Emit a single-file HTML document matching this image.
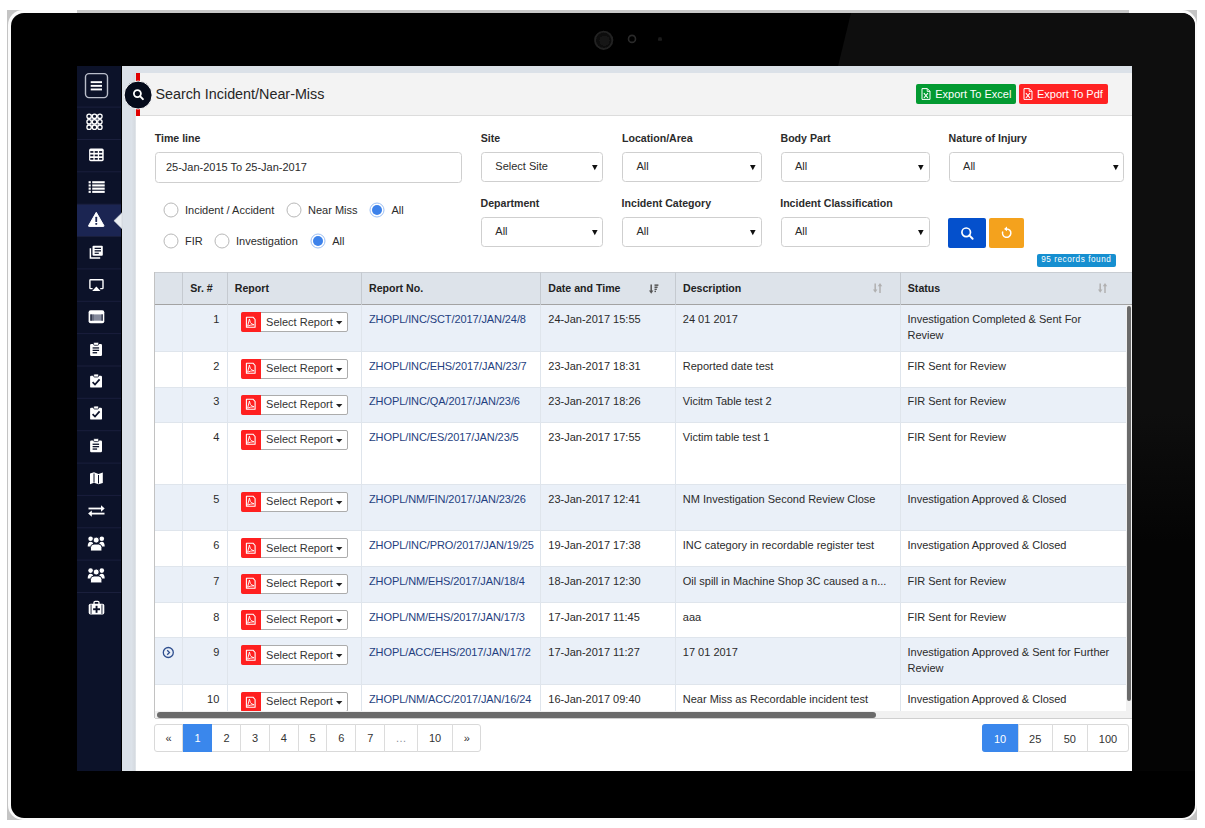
<!DOCTYPE html>
<html><head><meta charset="utf-8">
<style>
*{box-sizing:border-box;margin:0;padding:0}
html,body{width:1205px;height:828px;overflow:hidden;background:#fff;font-family:"Liberation Sans",sans-serif;color:#333}
.abs,.r,.t{position:absolute}
.t{white-space:nowrap;line-height:1}
#clip{position:absolute;left:0;top:0;width:1205px;height:828px;clip-path:inset(66px 73px 57px 77px)}
</style></head><body>
<div class="abs" style="left:7px;top:10px;width:1190px;height:810px;background:#c4c4c4"></div>
<div class="abs" style="left:8px;top:10px;width:1189px;height:809.5px;background:#fafafa;border-radius:15px"></div>
<div class="abs" style="left:77px;top:10px;width:1052px;height:3px;background:#c8c8c8"></div>
<div class="abs" style="left:11px;top:12.5px;width:1183.5px;height:805px;background:#000;border-radius:13px;overflow:hidden">
<svg class="abs" style="left:0;top:0" width="1184" height="805">
<defs><linearGradient id="rg" gradientUnits="userSpaceOnUse" x1="0" y1="400" x2="0" y2="530"><stop offset="0" stop-color="#0e0e0e"/><stop offset="1" stop-color="#040404"/></linearGradient></defs><polygon points="840,0 1184,0 1184,758 1121,758 827,53.5" fill="url(#rg)"/>
<defs><filter id="bl"><feGaussianBlur stdDeviation="0.5"/></filter></defs><g filter="url(#bl)">
<circle cx="592.7" cy="27.3" r="8.7" fill="#101010" stroke="#222" stroke-width="1.8"/>
<circle cx="593.5" cy="27.8" r="5" fill="#161616"/>
<circle cx="621" cy="25.9" r="3.5" fill="none" stroke="#2a2a2a" stroke-width="1.6"/>
<circle cx="649" cy="26.1" r="2.2" fill="#1a1a1a"/></g>
</svg></div>
<div id="clip"><div class="r" style="left:77.00px;top:66.00px;width:1055.00px;height:705.00px;background:#dbe1e8"></div><div class="r" style="left:77px;top:66px;width:45px;height:705px;background:#0c1229"><svg class="abs" style="left:0;top:0" width="45" height="704"><rect x="0" y="138.1" width="45" height="31.9" fill="#1b2552"/><rect x="0" y="40.6" width="45" height="1" fill="#1a1f3c"/><rect x="0" y="73.0" width="45" height="1" fill="#1a1f3c"/><rect x="0" y="105.3" width="45" height="1" fill="#1a1f3c"/><rect x="0" y="137.7" width="45" height="1" fill="#1a1f3c"/><rect x="0" y="170.0" width="45" height="1" fill="#1a1f3c"/><rect x="0" y="202.4" width="45" height="1" fill="#1a1f3c"/><rect x="0" y="234.8" width="45" height="1" fill="#1a1f3c"/><rect x="0" y="267.1" width="45" height="1" fill="#1a1f3c"/><rect x="0" y="299.5" width="45" height="1" fill="#1a1f3c"/><rect x="0" y="331.8" width="45" height="1" fill="#1a1f3c"/><rect x="0" y="364.2" width="45" height="1" fill="#1a1f3c"/><rect x="0" y="396.6" width="45" height="1" fill="#1a1f3c"/><rect x="0" y="428.9" width="45" height="1" fill="#1a1f3c"/><rect x="0" y="461.3" width="45" height="1" fill="#1a1f3c"/><rect x="0" y="493.6" width="45" height="1" fill="#1a1f3c"/><rect x="0" y="526.0" width="45" height="1" fill="#1a1f3c"/><rect x="8.5" y="7.6" width="22" height="24" rx="3.5" fill="none" stroke="#b9bdca" stroke-width="1.4"/><rect x="13.7" y="15.2" width="11.3" height="1.9" fill="#fff"/><rect x="13.7" y="18.9" width="11.3" height="1.9" fill="#fff"/><rect x="13.7" y="22.5" width="11.3" height="1.9" fill="#fff"/><rect x="10" y="48.2" width="14.2" height="14.2" fill="#5c6175"/><circle cx="12.10" cy="50.30" r="2.2" fill="#0c1229" stroke="#fff" stroke-width="1.3"/><circle cx="12.10" cy="55.75" r="2.2" fill="#0c1229" stroke="#fff" stroke-width="1.3"/><circle cx="12.10" cy="61.20" r="2.2" fill="#0c1229" stroke="#fff" stroke-width="1.3"/><circle cx="17.50" cy="50.30" r="2.2" fill="#0c1229" stroke="#fff" stroke-width="1.3"/><circle cx="17.50" cy="55.75" r="2.2" fill="#0c1229" stroke="#fff" stroke-width="1.3"/><circle cx="17.50" cy="61.20" r="2.2" fill="#0c1229" stroke="#fff" stroke-width="1.3"/><circle cx="22.90" cy="50.30" r="2.2" fill="#0c1229" stroke="#fff" stroke-width="1.3"/><circle cx="22.90" cy="55.75" r="2.2" fill="#0c1229" stroke="#fff" stroke-width="1.3"/><circle cx="22.90" cy="61.20" r="2.2" fill="#0c1229" stroke="#fff" stroke-width="1.3"/><rect x="12.1" y="82.6" width="14.6" height="12.6" rx="1.6" fill="#fff"/><rect x="13.30" y="85.10" width="3.1" height="1.7" fill="#0c1229"/><rect x="13.30" y="88.55" width="3.1" height="1.7" fill="#0c1229"/><rect x="13.30" y="92.00" width="3.1" height="1.7" fill="#0c1229"/><rect x="17.70" y="85.10" width="3.1" height="1.7" fill="#0c1229"/><rect x="17.70" y="88.55" width="3.1" height="1.7" fill="#0c1229"/><rect x="17.70" y="92.00" width="3.1" height="1.7" fill="#0c1229"/><rect x="22.10" y="85.10" width="3.1" height="1.7" fill="#0c1229"/><rect x="22.10" y="88.55" width="3.1" height="1.7" fill="#0c1229"/><rect x="22.10" y="92.00" width="3.1" height="1.7" fill="#0c1229"/><rect x="11.6" y="115.2" width="2.2" height="2.1" fill="#fff"/><rect x="15.2" y="115.2" width="12.5" height="2.1" fill="#fff"/><rect x="11.6" y="118.4" width="2.2" height="2.1" fill="#fff"/><rect x="15.2" y="118.4" width="12.5" height="2.1" fill="#fff"/><rect x="11.6" y="121.6" width="2.2" height="2.1" fill="#fff"/><rect x="15.2" y="121.6" width="12.5" height="2.1" fill="#fff"/><rect x="11.6" y="124.8" width="2.2" height="2.1" fill="#fff"/><rect x="15.2" y="124.8" width="12.5" height="2.1" fill="#fff"/><path d="M19.25,146.3 L26.9,159.6 Q27.3,160.4 26.4,160.4 L12.1,160.4 Q11.2,160.4 11.6,159.6 Z" fill="#fff" stroke="#fff" stroke-width="1" stroke-linejoin="round"/><rect x="18.35" y="150.8" width="1.8" height="5.2" rx="0.5" fill="#1b2552"/><rect x="18.35" y="157" width="1.8" height="1.8" rx="0.4" fill="#1b2552"/><path d="M13.4,182.2 L13.4,192.1 L23.2,192.1" fill="none" stroke="#fff" stroke-width="1.5"/><rect x="15.5" y="179.8" width="10.3" height="9.9" rx="1" fill="#fff"/><rect x="17.6" y="181.7" width="6.4" height="1.3" fill="#0c1229"/><rect x="17.6" y="184.2" width="6.4" height="1.3" fill="#0c1229"/><rect x="17.6" y="186.7" width="4.2" height="1.2" fill="#0c1229"/><path d="M15.6,222.6 L13.6,222.6 Q12.9,222.6 12.9,221.9 L12.9,214.4 Q12.9,213.7 13.6,213.7 L25.3,213.7 Q26,213.7 26,214.4 L26,221.9 Q26,222.6 25.3,222.6 L23.2,222.6" fill="none" stroke="#fff" stroke-width="1.4"/><polygon points="19.35,220.4 23.5,224.9 15.2,224.9" fill="#fff"/><rect x="11.6" y="244.2" width="15.7" height="13" rx="2" fill="#fff"/><rect x="13.3" y="248.4" width="12.6" height="6.3" fill="#858a9c"/><rect x="13.3" y="248.4" width="1.6" height="6.3" fill="#2a2f45"/><rect x="24.4" y="248.4" width="1.5" height="6.3" fill="#3a3f55"/><rect x="15.6" y="248.4" width="0.8" height="6.3" fill="#40455a"/><rect x="13.1" y="278.1" width="11.9" height="11.8" rx="1.2" fill="#fff"/><rect x="16.6" y="276.3" width="5" height="3" rx="1" fill="#fff" stroke="#0c1229" stroke-width="0.8"/><rect x="15.6" y="281.3" width="6.5" height="1.3" fill="#0c1229"/><rect x="15.6" y="283.7" width="6.5" height="1.3" fill="#0c1229"/><rect x="15.6" y="286.1" width="4.5" height="1.3" fill="#0c1229"/><rect x="13.1" y="309.8" width="11.9" height="11.8" rx="1.2" fill="#fff"/><rect x="16.6" y="308.0" width="5" height="3" rx="1" fill="#fff" stroke="#0c1229" stroke-width="0.8"/><path d="M15.6,316.2 L18,318.6 L22.6,313.4" fill="none" stroke="#0c1229" stroke-width="1.7"/><rect x="13.1" y="341.8" width="11.9" height="11.8" rx="1.2" fill="#fff"/><rect x="16.6" y="340.0" width="5" height="3" rx="1" fill="#fff" stroke="#0c1229" stroke-width="0.8"/><path d="M15.6,348.2 L18,350.6 L22.6,345.4" fill="none" stroke="#0c1229" stroke-width="1.7"/><rect x="13.1" y="374.4" width="11.9" height="11.8" rx="1.2" fill="#fff"/><rect x="16.6" y="372.6" width="5" height="3" rx="1" fill="#fff" stroke="#0c1229" stroke-width="0.8"/><rect x="15.6" y="377.6" width="6.5" height="1.3" fill="#0c1229"/><rect x="15.6" y="380.0" width="6.5" height="1.3" fill="#0c1229"/><rect x="15.6" y="382.4" width="4.5" height="1.3" fill="#0c1229"/><path d="M13,407.5 L17,406.3 L21.5,408 L25.8,406.5 L25.8,417 L21.5,418.3 L17,416.8 L13,418.3 Z" fill="#fff"/><path d="M17,407.5 L17,416.5 M21.5,409 L21.5,417.5" stroke="#0c1229" stroke-width="1"/><path d="M11.5,442.5 L25,442.5" stroke="#fff" stroke-width="1.8"/><polygon points="24,439.2 27.7,442.5 24,445.8" fill="#fff"/><path d="M14,447.6 L27.5,447.6" stroke="#fff" stroke-width="1.8"/><polygon points="14.8,444.4 11.1,447.6 14.8,450.8" fill="#fff"/><circle cx="13.6" cy="472.7" r="2.3" fill="#fff"/><circle cx="24.8" cy="472.7" r="2.3" fill="#fff"/><path d="M10.7,480.5 Q10.7,475.8 13.6,475.8 Q16,475.8 16,477.5 L16,480.5 Z" fill="#fff"/><path d="M27.7,480.5 Q27.7,475.8 24.8,475.8 Q22.4,475.8 22.4,477.5 L22.4,480.5 Z" fill="#fff"/><circle cx="19.2" cy="474.1" r="3" fill="#fff" stroke="#0c1229" stroke-width="0.9"/><path d="M13.5,485.0 L13.5,481.5 Q13.5,478.1 17,478.1 L21.4,478.1 Q24.9,478.1 24.9,481.5 L24.9,485.0 Z" fill="#fff" stroke="#0c1229" stroke-width="0.9"/><circle cx="13.6" cy="504.6" r="2.3" fill="#fff"/><circle cx="24.8" cy="504.6" r="2.3" fill="#fff"/><path d="M10.7,512.4 Q10.7,507.7 13.6,507.7 Q16,507.7 16,509.4 L16,512.4 Z" fill="#fff"/><path d="M27.7,512.4 Q27.7,507.7 24.8,507.7 Q22.4,507.7 22.4,509.4 L22.4,512.4 Z" fill="#fff"/><circle cx="19.2" cy="506.0" r="3" fill="#fff" stroke="#0c1229" stroke-width="0.9"/><path d="M13.5,516.9 L13.5,513.4 Q13.5,510.0 17,510.0 L21.4,510.0 Q24.9,510.0 24.9,513.4 L24.9,516.9 Z" fill="#fff" stroke="#0c1229" stroke-width="0.9"/><rect x="17" y="535.4" width="5" height="3.6" rx="1.2" fill="none" stroke="#fff" stroke-width="1.3"/><rect x="11.7" y="537.8" width="15.6" height="10.8" rx="1.8" fill="#fff"/><rect x="13.6" y="538.5" width="0.9" height="9.4" fill="#0c1229"/><rect x="24.5" y="538.5" width="0.9" height="9.4" fill="#0c1229"/><rect x="18.6" y="539.8" width="1.9" height="7" fill="#0c1229"/><rect x="16.1" y="542.3" width="6.9" height="1.9" fill="#0c1229"/></svg></div><div class="r" style="left:121.00px;top:66.00px;width:1.00px;height:705.00px;background:#000"></div><svg class="r" style="left:112px;top:210px" width="12" height="22"><polygon points="1.9,10.7 10,2.7 10,18.7" fill="#e9edf1" stroke="#c5cad0" stroke-width="0.5"/></svg><div class="r" style="left:131.00px;top:73.00px;width:5.00px;height:698.00px;background:linear-gradient(90deg,#dde3ea,#d6dbe1 70%,#e4e8ec)"></div><div class="r" style="left:136.00px;top:73.00px;width:996.00px;height:698.00px;background:#fff"></div><div class="r" style="left:136.00px;top:73.00px;width:996.00px;height:43.00px;background:#f3f3f3;border-bottom:1px solid #dcdcdc"></div><div class="r" style="left:136.40px;top:73.00px;width:3.30px;height:43.00px;background:#e00000"></div><svg class="r" style="left:120px;top:77px" width="36" height="36"><circle cx="18.1" cy="18.05" r="14" fill="#050b1b" stroke="#fff" stroke-width="1"/><circle cx="17.4" cy="16.6" r="3.5" fill="none" stroke="#fff" stroke-width="1.8"/><path d="M20.2,19.4 L22.9,22.1" stroke="#fff" stroke-width="2" stroke-linecap="round"/></svg><div class="t" style="left:155.40px;top:86.55px;font-size:14.35px;font-weight:400;color:#262626;">Search Incident/Near-Miss</div><div class="r" style="left:916.30px;top:84.20px;width:99.60px;height:20.00px;background:#039a31;border-radius:2px"></div><svg class="r" style="left:921px;top:87.8px" width="10" height="12"><path d="M1,0.6 L6.3,0.6 L9,3.3 L9,11.4 L1,11.4 Z" fill="none" stroke="#fff" stroke-width="1"/><path d="M6.2,0.6 L6.2,3.4 L9,3.4" fill="none" stroke="#fff" stroke-width="0.9"/><path d="M2.9,5.2 L6.9,10 M6.9,5.2 L2.9,10" stroke="#fff" stroke-width="1.1"/></svg><div class="t" style="left:935.20px;top:88.89px;font-size:11px;font-weight:400;color:#fff;">Export To Excel</div><div class="r" style="left:1018.70px;top:84.20px;width:88.90px;height:20.00px;background:#ff2222;border-radius:2px"></div><svg class="r" style="left:1022.8px;top:87.8px" width="10" height="12"><path d="M1,0.6 L6.3,0.6 L9,3.3 L9,11.4 L1,11.4 Z" fill="none" stroke="#fff" stroke-width="1"/><path d="M6.2,0.6 L6.2,3.4 L9,3.4" fill="none" stroke="#fff" stroke-width="0.9"/><path d="M2.9,5.2 L6.9,10 M6.9,5.2 L2.9,10" stroke="#fff" stroke-width="1.1"/></svg><div class="t" style="left:1037.00px;top:88.89px;font-size:11px;font-weight:400;color:#fff;">Export To Pdf</div><div class="t" style="left:154.70px;top:133.33px;font-size:10.6px;font-weight:700;color:#2b2b2b;">Time line</div><div class="t" style="left:480.80px;top:133.33px;font-size:10.6px;font-weight:700;color:#2b2b2b;">Site</div><div class="t" style="left:622.00px;top:133.33px;font-size:10.6px;font-weight:700;color:#2b2b2b;">Location/Area</div><div class="t" style="left:780.50px;top:133.33px;font-size:10.6px;font-weight:700;color:#2b2b2b;">Body Part</div><div class="t" style="left:948.60px;top:133.33px;font-size:10.6px;font-weight:700;color:#2b2b2b;">Nature of Injury</div><div class="t" style="left:480.50px;top:197.93px;font-size:10.6px;font-weight:700;color:#2b2b2b;">Department</div><div class="t" style="left:621.60px;top:197.93px;font-size:10.6px;font-weight:700;color:#2b2b2b;">Incident Category</div><div class="t" style="left:780.20px;top:197.93px;font-size:10.6px;font-weight:700;color:#2b2b2b;">Incident Classification</div><div class="r" style="left:154.60px;top:152.10px;width:307.80px;height:30.70px;border:1px solid #cfcfcf;border-radius:3.5px;background:#fff"></div><div class="t" style="left:165.90px;top:161.99px;font-size:11px;font-weight:400;color:#2b2b2b;">25-Jan-2015 To 25-Jan-2017</div><div class="r" style="left:480.80px;top:152.30px;width:122.60px;height:29.30px;border:1px solid #cfcfcf;border-radius:3.5px;background:#fff"></div><div class="t" style="left:495.30px;top:161.19px;font-size:11px;font-weight:400;color:#2b2b2b;">Select Site</div><svg class="r" style="left:591.70px;top:165.00px" width="6" height="6"><polygon points="0,0 5.6,0 2.8,5.2" fill="#111"/></svg><div class="r" style="left:622.00px;top:152.30px;width:139.80px;height:29.30px;border:1px solid #cfcfcf;border-radius:3.5px;background:#fff"></div><div class="t" style="left:636.50px;top:161.19px;font-size:11px;font-weight:400;color:#2b2b2b;">All</div><svg class="r" style="left:750.10px;top:165.00px" width="6" height="6"><polygon points="0,0 5.6,0 2.8,5.2" fill="#111"/></svg><div class="r" style="left:780.50px;top:152.30px;width:149.40px;height:29.30px;border:1px solid #cfcfcf;border-radius:3.5px;background:#fff"></div><div class="t" style="left:795.00px;top:161.19px;font-size:11px;font-weight:400;color:#2b2b2b;">All</div><svg class="r" style="left:918.20px;top:165.00px" width="6" height="6"><polygon points="0,0 5.6,0 2.8,5.2" fill="#111"/></svg><div class="r" style="left:948.60px;top:152.30px;width:175.80px;height:29.30px;border:1px solid #cfcfcf;border-radius:3.5px;background:#fff"></div><div class="t" style="left:963.10px;top:161.19px;font-size:11px;font-weight:400;color:#2b2b2b;">All</div><svg class="r" style="left:1112.70px;top:165.00px" width="6" height="6"><polygon points="0,0 5.6,0 2.8,5.2" fill="#111"/></svg><div class="r" style="left:480.80px;top:216.90px;width:122.60px;height:29.90px;border:1px solid #cfcfcf;border-radius:3.5px;background:#fff"></div><div class="t" style="left:495.30px;top:225.79px;font-size:11px;font-weight:400;color:#2b2b2b;">All</div><svg class="r" style="left:591.70px;top:229.60px" width="6" height="6"><polygon points="0,0 5.6,0 2.8,5.2" fill="#111"/></svg><div class="r" style="left:622.00px;top:216.90px;width:139.80px;height:29.90px;border:1px solid #cfcfcf;border-radius:3.5px;background:#fff"></div><div class="t" style="left:636.50px;top:225.79px;font-size:11px;font-weight:400;color:#2b2b2b;">All</div><svg class="r" style="left:750.10px;top:229.60px" width="6" height="6"><polygon points="0,0 5.6,0 2.8,5.2" fill="#111"/></svg><div class="r" style="left:780.50px;top:216.90px;width:149.40px;height:29.90px;border:1px solid #cfcfcf;border-radius:3.5px;background:#fff"></div><div class="t" style="left:795.00px;top:225.79px;font-size:11px;font-weight:400;color:#2b2b2b;">All</div><svg class="r" style="left:918.20px;top:229.60px" width="6" height="6"><polygon points="0,0 5.6,0 2.8,5.2" fill="#111"/></svg><div class="r" style="left:948.00px;top:218.20px;width:38.10px;height:29.40px;background:#0450cc;border-radius:2px"></div><svg class="r" style="left:958px;top:224px" width="18" height="18"><circle cx="8.2" cy="8.3" r="4.3" fill="none" stroke="#fff" stroke-width="1.7"/><path d="M11.3,11.4 L14.6,14.7" stroke="#fff" stroke-width="2" stroke-linecap="round"/></svg><div class="r" style="left:989.20px;top:218.20px;width:35.00px;height:29.40px;background:#f4a21d;border-radius:2px"></div><svg class="r" style="left:998px;top:225px" width="18" height="18"><path d="M8.7,3.9 A4.2,4.2 0 1 1 4.75,6.56" fill="none" stroke="#fff" stroke-width="1.5"/><polygon points="6.0,3.9 9.0,1.5 9.0,6.3" fill="#fff"/></svg><div class="r" style="left:1036.50px;top:254.30px;width:79.20px;height:12.30px;background:#168fd0;border-radius:2px"></div><div class="t" style="left:1041.20px;top:256.36px;font-size:8.2px;font-weight:400;color:#fff;letter-spacing:0.55px">95 records found</div><svg class="r" style="left:162.70px;top:202.40px" width="16" height="16"><circle cx="8" cy="8" r="7" fill="#fff" stroke="#b8b8b8" stroke-width="1"/></svg><div class="t" style="left:185.00px;top:204.59px;font-size:11px;font-weight:400;color:#2b2b2b;">Incident / Accident</div><svg class="r" style="left:285.80px;top:202.40px" width="16" height="16"><circle cx="8" cy="8" r="7" fill="#fff" stroke="#b8b8b8" stroke-width="1"/></svg><div class="t" style="left:308.00px;top:204.59px;font-size:11px;font-weight:400;color:#2b2b2b;">Near Miss</div><svg class="r" style="left:368.80px;top:202.40px" width="16" height="16"><circle cx="8" cy="8" r="7" fill="#fff" stroke="#9cc0f5" stroke-width="1"/><circle cx="8" cy="8" r="5" fill="#3d82ea"/></svg><div class="t" style="left:391.40px;top:204.59px;font-size:11px;font-weight:400;color:#2b2b2b;">All</div><svg class="r" style="left:162.70px;top:233.20px" width="16" height="16"><circle cx="8" cy="8" r="7" fill="#fff" stroke="#b8b8b8" stroke-width="1"/></svg><div class="t" style="left:185.00px;top:235.69px;font-size:11px;font-weight:400;color:#2b2b2b;">FIR</div><svg class="r" style="left:213.70px;top:233.20px" width="16" height="16"><circle cx="8" cy="8" r="7" fill="#fff" stroke="#b8b8b8" stroke-width="1"/></svg><div class="t" style="left:236.00px;top:235.69px;font-size:11px;font-weight:400;color:#2b2b2b;">Investigation</div><svg class="r" style="left:309.70px;top:233.20px" width="16" height="16"><circle cx="8" cy="8" r="7" fill="#fff" stroke="#9cc0f5" stroke-width="1"/><circle cx="8" cy="8" r="5" fill="#3d82ea"/></svg><div class="t" style="left:332.20px;top:235.69px;font-size:11px;font-weight:400;color:#2b2b2b;">All</div><div class="r" style="left:154.00px;top:272.00px;width:986.00px;height:33.00px;background:#dde3ea;border-top:1px solid #c9cdd2"></div><div class="r" style="left:154.00px;top:304.00px;width:986.00px;height:1.00px;background:#a3a3a3"></div><div class="r" style="left:154.00px;top:304.50px;width:986.00px;height:47.00px;background:#eaf0f8"></div><div class="r" style="left:154.00px;top:351.50px;width:986.00px;height:35.50px;background:#fff"></div><div class="r" style="left:154.00px;top:351.00px;width:986.00px;height:1.00px;background:#dfe5ec"></div><div class="r" style="left:154.00px;top:387.00px;width:986.00px;height:35.60px;background:#eaf0f8"></div><div class="r" style="left:154.00px;top:386.50px;width:986.00px;height:1.00px;background:#dfe5ec"></div><div class="r" style="left:154.00px;top:422.60px;width:986.00px;height:61.90px;background:#fff"></div><div class="r" style="left:154.00px;top:422.10px;width:986.00px;height:1.00px;background:#dfe5ec"></div><div class="r" style="left:154.00px;top:484.50px;width:986.00px;height:46.30px;background:#eaf0f8"></div><div class="r" style="left:154.00px;top:484.00px;width:986.00px;height:1.00px;background:#dfe5ec"></div><div class="r" style="left:154.00px;top:530.80px;width:986.00px;height:35.50px;background:#fff"></div><div class="r" style="left:154.00px;top:530.30px;width:986.00px;height:1.00px;background:#dfe5ec"></div><div class="r" style="left:154.00px;top:566.30px;width:986.00px;height:36.30px;background:#eaf0f8"></div><div class="r" style="left:154.00px;top:565.80px;width:986.00px;height:1.00px;background:#dfe5ec"></div><div class="r" style="left:154.00px;top:602.60px;width:986.00px;height:35.30px;background:#fff"></div><div class="r" style="left:154.00px;top:602.10px;width:986.00px;height:1.00px;background:#dfe5ec"></div><div class="r" style="left:154.00px;top:637.90px;width:986.00px;height:46.80px;background:#eaf0f8"></div><div class="r" style="left:154.00px;top:637.40px;width:986.00px;height:1.00px;background:#dfe5ec"></div><div class="r" style="left:154.00px;top:684.70px;width:986.00px;height:45.30px;background:#fff"></div><div class="r" style="left:154.00px;top:684.20px;width:986.00px;height:1.00px;background:#dfe5ec"></div><div class="r" style="left:181.50px;top:272.00px;width:1.00px;height:33.00px;background:#c5cad0"></div><div class="r" style="left:181.50px;top:305.00px;width:1.00px;height:413.00px;background:#dfe5ec"></div><div class="r" style="left:226.50px;top:272.00px;width:1.00px;height:33.00px;background:#c5cad0"></div><div class="r" style="left:226.50px;top:305.00px;width:1.00px;height:413.00px;background:#dfe5ec"></div><div class="r" style="left:361.00px;top:272.00px;width:1.00px;height:33.00px;background:#c5cad0"></div><div class="r" style="left:361.00px;top:305.00px;width:1.00px;height:413.00px;background:#dfe5ec"></div><div class="r" style="left:540.10px;top:272.00px;width:1.00px;height:33.00px;background:#c5cad0"></div><div class="r" style="left:540.10px;top:305.00px;width:1.00px;height:413.00px;background:#dfe5ec"></div><div class="r" style="left:675.10px;top:272.00px;width:1.00px;height:33.00px;background:#c5cad0"></div><div class="r" style="left:675.10px;top:305.00px;width:1.00px;height:413.00px;background:#dfe5ec"></div><div class="r" style="left:899.50px;top:272.00px;width:1.00px;height:33.00px;background:#c5cad0"></div><div class="r" style="left:899.50px;top:305.00px;width:1.00px;height:413.00px;background:#dfe5ec"></div><div class="r" style="left:154.00px;top:272.00px;width:1.00px;height:446.00px;background:#c2c2c2"></div><div class="t" style="left:190.30px;top:283.33px;font-size:10.6px;font-weight:700;color:#222;">Sr. #</div><div class="t" style="left:234.80px;top:283.33px;font-size:10.6px;font-weight:700;color:#222;">Report</div><div class="t" style="left:369.00px;top:283.33px;font-size:10.6px;font-weight:700;color:#222;">Report No.</div><div class="t" style="left:548.30px;top:283.33px;font-size:10.6px;font-weight:700;color:#222;">Date and Time</div><div class="t" style="left:683.00px;top:283.33px;font-size:10.6px;font-weight:700;color:#222;">Description</div><div class="t" style="left:907.80px;top:283.33px;font-size:10.6px;font-weight:700;color:#222;">Status</div><svg class="r" style="left:649px;top:283.5px" width="10" height="11"><path d="M2.2,0.5 L2.2,8" stroke="#555" stroke-width="1.5"/><polygon points="0,6.5 4.4,6.5 2.2,9.8" fill="#555"/><rect x="5.5" y="0.4" width="3.9" height="1.5" fill="#555"/><rect x="5.5" y="2.5" width="3.1" height="1.5" fill="#555"/><rect x="5.5" y="4.6" width="2.3" height="1.4" fill="#555"/><rect x="5.5" y="6.7" width="1.5" height="1.4" fill="#555"/></svg><svg class="r" style="left:873.3px;top:283px" width="10" height="11"><path d="M2.2,0.5 L2.2,8" stroke="#b0b0b0" stroke-width="1.5"/><polygon points="0,6.5 4.4,6.5 2.2,9.8" fill="#b0b0b0"/><path d="M7,2.5 L7,10" stroke="#b0b0b0" stroke-width="1.5"/><polygon points="4.8,3.3 9.2,3.3 7,0" fill="#b0b0b0"/></svg><svg class="r" style="left:1097.8px;top:283px" width="10" height="11"><path d="M2.2,0.5 L2.2,8" stroke="#b0b0b0" stroke-width="1.5"/><polygon points="0,6.5 4.4,6.5 2.2,9.8" fill="#b0b0b0"/><path d="M7,2.5 L7,10" stroke="#b0b0b0" stroke-width="1.5"/><polygon points="4.8,3.3 9.2,3.3 7,0" fill="#b0b0b0"/></svg><div class="t" style="left:213.20px;top:314.09px;font-size:11px;font-weight:400;color:#2b2b2b;">1</div><div class="r" style="left:241.10px;top:312.30px;width:107.30px;height:20.00px;border:1px solid #acacac;border-radius:2px;background:#fff"></div><div class="r" style="left:241.10px;top:312.30px;width:20.00px;height:20.00px;background:#ff2020;border-radius:2px 0 0 2px"></div><svg class="r" style="left:245.2px;top:315.59999999999997px" width="12" height="13"><path d="M1.4,1.2 L8,1.2 L10.1,3.5 L10.1,11.2 L1.4,11.2 Z" fill="none" stroke="#fff" stroke-width="1.1" stroke-linejoin="round"/><path d="M2.6,10.2 L4.4,3 L5.3,6.4 Q6.4,8.3 9.1,8.8 Q5.6,8.7 2.6,10.2 Z" fill="none" stroke="#fff" stroke-width="0.9"/></svg><div class="t" style="left:266.10px;top:316.59px;font-size:11px;font-weight:400;color:#333;">Select Report</div><svg class="r" style="left:336px;top:321.30px" width="7" height="4"><polygon points="0,0 6.4,0 3.2,3.4" fill="#222"/></svg><div class="t" style="left:369.00px;top:314.09px;font-size:11px;font-weight:400;color:#1f3f80;letter-spacing:-0.1px">ZHOPL/INC/SCT/2017/JAN/24/8</div><div class="t" style="left:548.30px;top:314.09px;font-size:11px;font-weight:400;color:#2b2b2b;">24-Jan-2017 15:55</div><div class="t" style="left:682.80px;top:314.09px;font-size:11px;font-weight:400;color:#2b2b2b;">24 01 2017</div><div class="t" style="left:907.50px;top:314.09px;font-size:11px;font-weight:400;color:#2b2b2b;">Investigation Completed &amp; Sent For</div><div class="t" style="left:907.50px;top:330.09px;font-size:11px;font-weight:400;color:#2b2b2b;">Review</div><div class="t" style="left:213.20px;top:360.79px;font-size:11px;font-weight:400;color:#2b2b2b;">2</div><div class="r" style="left:241.10px;top:359.00px;width:107.30px;height:20.00px;border:1px solid #acacac;border-radius:2px;background:#fff"></div><div class="r" style="left:241.10px;top:359.00px;width:20.00px;height:20.00px;background:#ff2020;border-radius:2px 0 0 2px"></div><svg class="r" style="left:245.2px;top:362.3px" width="12" height="13"><path d="M1.4,1.2 L8,1.2 L10.1,3.5 L10.1,11.2 L1.4,11.2 Z" fill="none" stroke="#fff" stroke-width="1.1" stroke-linejoin="round"/><path d="M2.6,10.2 L4.4,3 L5.3,6.4 Q6.4,8.3 9.1,8.8 Q5.6,8.7 2.6,10.2 Z" fill="none" stroke="#fff" stroke-width="0.9"/></svg><div class="t" style="left:266.10px;top:363.29px;font-size:11px;font-weight:400;color:#333;">Select Report</div><svg class="r" style="left:336px;top:368.00px" width="7" height="4"><polygon points="0,0 6.4,0 3.2,3.4" fill="#222"/></svg><div class="t" style="left:369.00px;top:360.79px;font-size:11px;font-weight:400;color:#1f3f80;letter-spacing:-0.1px">ZHOPL/INC/EHS/2017/JAN/23/7</div><div class="t" style="left:548.30px;top:360.79px;font-size:11px;font-weight:400;color:#2b2b2b;">23-Jan-2017 18:31</div><div class="t" style="left:682.80px;top:360.79px;font-size:11px;font-weight:400;color:#2b2b2b;">Reported date test</div><div class="t" style="left:907.50px;top:360.79px;font-size:11px;font-weight:400;color:#2b2b2b;">FIR Sent for Review</div><div class="t" style="left:213.20px;top:396.29px;font-size:11px;font-weight:400;color:#2b2b2b;">3</div><div class="r" style="left:241.10px;top:394.50px;width:107.30px;height:20.00px;border:1px solid #acacac;border-radius:2px;background:#fff"></div><div class="r" style="left:241.10px;top:394.50px;width:20.00px;height:20.00px;background:#ff2020;border-radius:2px 0 0 2px"></div><svg class="r" style="left:245.2px;top:397.8px" width="12" height="13"><path d="M1.4,1.2 L8,1.2 L10.1,3.5 L10.1,11.2 L1.4,11.2 Z" fill="none" stroke="#fff" stroke-width="1.1" stroke-linejoin="round"/><path d="M2.6,10.2 L4.4,3 L5.3,6.4 Q6.4,8.3 9.1,8.8 Q5.6,8.7 2.6,10.2 Z" fill="none" stroke="#fff" stroke-width="0.9"/></svg><div class="t" style="left:266.10px;top:398.79px;font-size:11px;font-weight:400;color:#333;">Select Report</div><svg class="r" style="left:336px;top:403.50px" width="7" height="4"><polygon points="0,0 6.4,0 3.2,3.4" fill="#222"/></svg><div class="t" style="left:369.00px;top:396.29px;font-size:11px;font-weight:400;color:#1f3f80;letter-spacing:-0.1px">ZHOPL/INC/QA/2017/JAN/23/6</div><div class="t" style="left:548.30px;top:396.29px;font-size:11px;font-weight:400;color:#2b2b2b;">23-Jan-2017 18:26</div><div class="t" style="left:682.80px;top:396.29px;font-size:11px;font-weight:400;color:#2b2b2b;">Vicitm Table test 2</div><div class="t" style="left:907.50px;top:396.29px;font-size:11px;font-weight:400;color:#2b2b2b;">FIR Sent for Review</div><div class="t" style="left:213.20px;top:431.89px;font-size:11px;font-weight:400;color:#2b2b2b;">4</div><div class="r" style="left:241.10px;top:430.10px;width:107.30px;height:20.00px;border:1px solid #acacac;border-radius:2px;background:#fff"></div><div class="r" style="left:241.10px;top:430.10px;width:20.00px;height:20.00px;background:#ff2020;border-radius:2px 0 0 2px"></div><svg class="r" style="left:245.2px;top:433.40000000000003px" width="12" height="13"><path d="M1.4,1.2 L8,1.2 L10.1,3.5 L10.1,11.2 L1.4,11.2 Z" fill="none" stroke="#fff" stroke-width="1.1" stroke-linejoin="round"/><path d="M2.6,10.2 L4.4,3 L5.3,6.4 Q6.4,8.3 9.1,8.8 Q5.6,8.7 2.6,10.2 Z" fill="none" stroke="#fff" stroke-width="0.9"/></svg><div class="t" style="left:266.10px;top:434.39px;font-size:11px;font-weight:400;color:#333;">Select Report</div><svg class="r" style="left:336px;top:439.10px" width="7" height="4"><polygon points="0,0 6.4,0 3.2,3.4" fill="#222"/></svg><div class="t" style="left:369.00px;top:431.89px;font-size:11px;font-weight:400;color:#1f3f80;letter-spacing:-0.1px">ZHOPL/INC/ES/2017/JAN/23/5</div><div class="t" style="left:548.30px;top:431.89px;font-size:11px;font-weight:400;color:#2b2b2b;">23-Jan-2017 17:55</div><div class="t" style="left:682.80px;top:431.89px;font-size:11px;font-weight:400;color:#2b2b2b;">Victim table test 1</div><div class="t" style="left:907.50px;top:431.89px;font-size:11px;font-weight:400;color:#2b2b2b;">FIR Sent for Review</div><div class="t" style="left:213.20px;top:493.79px;font-size:11px;font-weight:400;color:#2b2b2b;">5</div><div class="r" style="left:241.10px;top:492.00px;width:107.30px;height:20.00px;border:1px solid #acacac;border-radius:2px;background:#fff"></div><div class="r" style="left:241.10px;top:492.00px;width:20.00px;height:20.00px;background:#ff2020;border-radius:2px 0 0 2px"></div><svg class="r" style="left:245.2px;top:495.3px" width="12" height="13"><path d="M1.4,1.2 L8,1.2 L10.1,3.5 L10.1,11.2 L1.4,11.2 Z" fill="none" stroke="#fff" stroke-width="1.1" stroke-linejoin="round"/><path d="M2.6,10.2 L4.4,3 L5.3,6.4 Q6.4,8.3 9.1,8.8 Q5.6,8.7 2.6,10.2 Z" fill="none" stroke="#fff" stroke-width="0.9"/></svg><div class="t" style="left:266.10px;top:496.29px;font-size:11px;font-weight:400;color:#333;">Select Report</div><svg class="r" style="left:336px;top:501.00px" width="7" height="4"><polygon points="0,0 6.4,0 3.2,3.4" fill="#222"/></svg><div class="t" style="left:369.00px;top:493.79px;font-size:11px;font-weight:400;color:#1f3f80;letter-spacing:-0.1px">ZHOPL/NM/FIN/2017/JAN/23/26</div><div class="t" style="left:548.30px;top:493.79px;font-size:11px;font-weight:400;color:#2b2b2b;">23-Jan-2017 12:41</div><div class="t" style="left:682.80px;top:493.79px;font-size:11px;font-weight:400;color:#2b2b2b;">NM Investigation Second Review Close</div><div class="t" style="left:907.50px;top:493.79px;font-size:11px;font-weight:400;color:#2b2b2b;">Investigation Approved &amp; Closed</div><div class="t" style="left:213.20px;top:540.09px;font-size:11px;font-weight:400;color:#2b2b2b;">6</div><div class="r" style="left:241.10px;top:538.30px;width:107.30px;height:20.00px;border:1px solid #acacac;border-radius:2px;background:#fff"></div><div class="r" style="left:241.10px;top:538.30px;width:20.00px;height:20.00px;background:#ff2020;border-radius:2px 0 0 2px"></div><svg class="r" style="left:245.2px;top:541.5999999999999px" width="12" height="13"><path d="M1.4,1.2 L8,1.2 L10.1,3.5 L10.1,11.2 L1.4,11.2 Z" fill="none" stroke="#fff" stroke-width="1.1" stroke-linejoin="round"/><path d="M2.6,10.2 L4.4,3 L5.3,6.4 Q6.4,8.3 9.1,8.8 Q5.6,8.7 2.6,10.2 Z" fill="none" stroke="#fff" stroke-width="0.9"/></svg><div class="t" style="left:266.10px;top:542.59px;font-size:11px;font-weight:400;color:#333;">Select Report</div><svg class="r" style="left:336px;top:547.30px" width="7" height="4"><polygon points="0,0 6.4,0 3.2,3.4" fill="#222"/></svg><div class="t" style="left:369.00px;top:540.09px;font-size:11px;font-weight:400;color:#1f3f80;letter-spacing:-0.1px">ZHOPL/INC/PRO/2017/JAN/19/25</div><div class="t" style="left:548.30px;top:540.09px;font-size:11px;font-weight:400;color:#2b2b2b;">19-Jan-2017 17:38</div><div class="t" style="left:682.80px;top:540.09px;font-size:11px;font-weight:400;color:#2b2b2b;">INC category in recordable register test</div><div class="t" style="left:907.50px;top:540.09px;font-size:11px;font-weight:400;color:#2b2b2b;">Investigation Approved &amp; Closed</div><div class="t" style="left:213.20px;top:575.59px;font-size:11px;font-weight:400;color:#2b2b2b;">7</div><div class="r" style="left:241.10px;top:573.80px;width:107.30px;height:20.00px;border:1px solid #acacac;border-radius:2px;background:#fff"></div><div class="r" style="left:241.10px;top:573.80px;width:20.00px;height:20.00px;background:#ff2020;border-radius:2px 0 0 2px"></div><svg class="r" style="left:245.2px;top:577.0999999999999px" width="12" height="13"><path d="M1.4,1.2 L8,1.2 L10.1,3.5 L10.1,11.2 L1.4,11.2 Z" fill="none" stroke="#fff" stroke-width="1.1" stroke-linejoin="round"/><path d="M2.6,10.2 L4.4,3 L5.3,6.4 Q6.4,8.3 9.1,8.8 Q5.6,8.7 2.6,10.2 Z" fill="none" stroke="#fff" stroke-width="0.9"/></svg><div class="t" style="left:266.10px;top:578.09px;font-size:11px;font-weight:400;color:#333;">Select Report</div><svg class="r" style="left:336px;top:582.80px" width="7" height="4"><polygon points="0,0 6.4,0 3.2,3.4" fill="#222"/></svg><div class="t" style="left:369.00px;top:575.59px;font-size:11px;font-weight:400;color:#1f3f80;letter-spacing:-0.1px">ZHOPL/NM/EHS/2017/JAN/18/4</div><div class="t" style="left:548.30px;top:575.59px;font-size:11px;font-weight:400;color:#2b2b2b;">18-Jan-2017 12:30</div><div class="t" style="left:682.80px;top:575.59px;font-size:11px;font-weight:400;color:#2b2b2b;">Oil spill in Machine Shop 3C caused a n...</div><div class="t" style="left:907.50px;top:575.59px;font-size:11px;font-weight:400;color:#2b2b2b;">FIR Sent for Review</div><div class="t" style="left:213.20px;top:611.89px;font-size:11px;font-weight:400;color:#2b2b2b;">8</div><div class="r" style="left:241.10px;top:610.10px;width:107.30px;height:20.00px;border:1px solid #acacac;border-radius:2px;background:#fff"></div><div class="r" style="left:241.10px;top:610.10px;width:20.00px;height:20.00px;background:#ff2020;border-radius:2px 0 0 2px"></div><svg class="r" style="left:245.2px;top:613.4px" width="12" height="13"><path d="M1.4,1.2 L8,1.2 L10.1,3.5 L10.1,11.2 L1.4,11.2 Z" fill="none" stroke="#fff" stroke-width="1.1" stroke-linejoin="round"/><path d="M2.6,10.2 L4.4,3 L5.3,6.4 Q6.4,8.3 9.1,8.8 Q5.6,8.7 2.6,10.2 Z" fill="none" stroke="#fff" stroke-width="0.9"/></svg><div class="t" style="left:266.10px;top:614.39px;font-size:11px;font-weight:400;color:#333;">Select Report</div><svg class="r" style="left:336px;top:619.10px" width="7" height="4"><polygon points="0,0 6.4,0 3.2,3.4" fill="#222"/></svg><div class="t" style="left:369.00px;top:611.89px;font-size:11px;font-weight:400;color:#1f3f80;letter-spacing:-0.1px">ZHOPL/NM/EHS/2017/JAN/17/3</div><div class="t" style="left:548.30px;top:611.89px;font-size:11px;font-weight:400;color:#2b2b2b;">17-Jan-2017 11:45</div><div class="t" style="left:682.80px;top:611.89px;font-size:11px;font-weight:400;color:#2b2b2b;">aaa</div><div class="t" style="left:907.50px;top:611.89px;font-size:11px;font-weight:400;color:#2b2b2b;">FIR Sent for Review</div><div class="t" style="left:213.20px;top:647.19px;font-size:11px;font-weight:400;color:#2b2b2b;">9</div><div class="r" style="left:241.10px;top:645.40px;width:107.30px;height:20.00px;border:1px solid #acacac;border-radius:2px;background:#fff"></div><div class="r" style="left:241.10px;top:645.40px;width:20.00px;height:20.00px;background:#ff2020;border-radius:2px 0 0 2px"></div><svg class="r" style="left:245.2px;top:648.6999999999999px" width="12" height="13"><path d="M1.4,1.2 L8,1.2 L10.1,3.5 L10.1,11.2 L1.4,11.2 Z" fill="none" stroke="#fff" stroke-width="1.1" stroke-linejoin="round"/><path d="M2.6,10.2 L4.4,3 L5.3,6.4 Q6.4,8.3 9.1,8.8 Q5.6,8.7 2.6,10.2 Z" fill="none" stroke="#fff" stroke-width="0.9"/></svg><div class="t" style="left:266.10px;top:649.69px;font-size:11px;font-weight:400;color:#333;">Select Report</div><svg class="r" style="left:336px;top:654.40px" width="7" height="4"><polygon points="0,0 6.4,0 3.2,3.4" fill="#222"/></svg><div class="t" style="left:369.00px;top:647.19px;font-size:11px;font-weight:400;color:#1f3f80;letter-spacing:-0.1px">ZHOPL/ACC/EHS/2017/JAN/17/2</div><div class="t" style="left:548.30px;top:647.19px;font-size:11px;font-weight:400;color:#2b2b2b;">17-Jan-2017 11:27</div><div class="t" style="left:682.80px;top:647.19px;font-size:11px;font-weight:400;color:#2b2b2b;">17 01 2017</div><div class="t" style="left:907.50px;top:647.19px;font-size:11px;font-weight:400;color:#2b2b2b;">Investigation Approved &amp; Sent for Further</div><div class="t" style="left:907.50px;top:663.19px;font-size:11px;font-weight:400;color:#2b2b2b;">Review</div><div class="t" style="left:207.10px;top:693.99px;font-size:11px;font-weight:400;color:#2b2b2b;">10</div><div class="r" style="left:241.10px;top:692.20px;width:107.30px;height:20.00px;border:1px solid #acacac;border-radius:2px;background:#fff"></div><div class="r" style="left:241.10px;top:692.20px;width:20.00px;height:20.00px;background:#ff2020;border-radius:2px 0 0 2px"></div><svg class="r" style="left:245.2px;top:695.5px" width="12" height="13"><path d="M1.4,1.2 L8,1.2 L10.1,3.5 L10.1,11.2 L1.4,11.2 Z" fill="none" stroke="#fff" stroke-width="1.1" stroke-linejoin="round"/><path d="M2.6,10.2 L4.4,3 L5.3,6.4 Q6.4,8.3 9.1,8.8 Q5.6,8.7 2.6,10.2 Z" fill="none" stroke="#fff" stroke-width="0.9"/></svg><div class="t" style="left:266.10px;top:696.49px;font-size:11px;font-weight:400;color:#333;">Select Report</div><svg class="r" style="left:336px;top:701.20px" width="7" height="4"><polygon points="0,0 6.4,0 3.2,3.4" fill="#222"/></svg><div class="t" style="left:369.00px;top:693.99px;font-size:11px;font-weight:400;color:#1f3f80;letter-spacing:-0.1px">ZHOPL/NM/ACC/2017/JAN/16/24</div><div class="t" style="left:548.30px;top:693.99px;font-size:11px;font-weight:400;color:#2b2b2b;">16-Jan-2017 09:40</div><div class="t" style="left:682.80px;top:693.99px;font-size:11px;font-weight:400;color:#2b2b2b;">Near Miss as Recordable incident test</div><div class="t" style="left:907.50px;top:693.99px;font-size:11px;font-weight:400;color:#2b2b2b;">Investigation Approved &amp; Closed</div><svg class="r" style="left:161.5px;top:645.8px" width="13" height="13"><circle cx="6.3" cy="6.5" r="5" fill="none" stroke="#2f4f8f" stroke-width="1.3"/><path d="M5.2,4.2 L7.5,6.5 L5.2,8.8" fill="none" stroke="#2f4f8f" stroke-width="1.3"/></svg><div class="r" style="left:155.00px;top:711.30px;width:977.00px;height:7.70px;background:#f1f1f1;border-bottom:1px solid #cfcfcf"></div><div class="r" style="left:157.00px;top:712.10px;width:719.00px;height:5.50px;background:#6b6b6b;border-radius:3px"></div><div class="r" style="left:1125.60px;top:305.00px;width:6.40px;height:406.30px;background:#f1f1f1"></div><div class="r" style="left:1126.50px;top:306.00px;width:4.50px;height:394.50px;background:#6b6b6b;border-radius:3px"></div><div class="r" style="left:154.20px;top:724.20px;width:326.70px;height:28.30px;border:1px solid #d9d9d9;border-radius:3px;background:#fff"></div><div class="t" style="left:154.20px;top:729.4px;width:28.70px;text-align:center;font-size:11px;line-height:18px;color:#333">«</div><div class="r" style="left:182.90px;top:724.20px;width:29.30px;height:28.30px;background:#3a87ec"></div><div class="r" style="left:182.40px;top:724.20px;width:1.00px;height:28.30px;background:#dcdcdc"></div><div class="t" style="left:182.90px;top:729.4px;width:29.30px;text-align:center;font-size:11px;line-height:18px;color:#fff">1</div><div class="t" style="left:212.20px;top:729.4px;width:28.50px;text-align:center;font-size:11px;line-height:18px;color:#333">2</div><div class="r" style="left:240.20px;top:724.20px;width:1.00px;height:28.30px;background:#dcdcdc"></div><div class="t" style="left:240.70px;top:729.4px;width:28.60px;text-align:center;font-size:11px;line-height:18px;color:#333">3</div><div class="r" style="left:268.80px;top:724.20px;width:1.00px;height:28.30px;background:#dcdcdc"></div><div class="t" style="left:269.30px;top:729.4px;width:28.90px;text-align:center;font-size:11px;line-height:18px;color:#333">4</div><div class="r" style="left:297.70px;top:724.20px;width:1.00px;height:28.30px;background:#dcdcdc"></div><div class="t" style="left:298.20px;top:729.4px;width:28.60px;text-align:center;font-size:11px;line-height:18px;color:#333">5</div><div class="r" style="left:326.30px;top:724.20px;width:1.00px;height:28.30px;background:#dcdcdc"></div><div class="t" style="left:326.80px;top:729.4px;width:28.90px;text-align:center;font-size:11px;line-height:18px;color:#333">6</div><div class="r" style="left:355.20px;top:724.20px;width:1.00px;height:28.30px;background:#dcdcdc"></div><div class="t" style="left:355.70px;top:729.4px;width:29.00px;text-align:center;font-size:11px;line-height:18px;color:#333">7</div><div class="r" style="left:384.20px;top:724.20px;width:1.00px;height:28.30px;background:#dcdcdc"></div><div class="t" style="left:384.70px;top:729.4px;width:32.70px;text-align:center;font-size:11px;line-height:18px;color:#8a8f99">…</div><div class="r" style="left:416.90px;top:724.20px;width:1.00px;height:28.30px;background:#dcdcdc"></div><div class="t" style="left:417.40px;top:729.4px;width:35.30px;text-align:center;font-size:11px;line-height:18px;color:#333">10</div><div class="r" style="left:452.20px;top:724.20px;width:1.00px;height:28.30px;background:#dcdcdc"></div><div class="t" style="left:452.70px;top:729.4px;width:28.20px;text-align:center;font-size:11px;line-height:18px;color:#333">»</div><div class="r" style="left:982.20px;top:724.00px;width:146.60px;height:28.20px;border:1px solid #d9d9d9;border-radius:3px;background:#fff"></div><div class="r" style="left:982.20px;top:724.00px;width:35.80px;height:28.20px;background:#3a87ec;border-radius:3px 0 0 3px"></div><div class="t" style="left:982.20px;top:729.6px;width:35.80px;text-align:center;font-size:11px;line-height:18px;color:#fff">10</div><div class="r" style="left:1017.50px;top:724.00px;width:1.00px;height:28.20px;background:#dcdcdc"></div><div class="t" style="left:1018.00px;top:729.6px;width:34.40px;text-align:center;font-size:11px;line-height:18px;color:#333">25</div><div class="r" style="left:1051.90px;top:724.00px;width:1.00px;height:28.20px;background:#dcdcdc"></div><div class="t" style="left:1052.40px;top:729.6px;width:34.80px;text-align:center;font-size:11px;line-height:18px;color:#333">50</div><div class="r" style="left:1086.70px;top:724.00px;width:1.00px;height:28.20px;background:#dcdcdc"></div><div class="t" style="left:1087.20px;top:729.6px;width:41.60px;text-align:center;font-size:11px;line-height:18px;color:#333">100</div></div>
</body></html>
